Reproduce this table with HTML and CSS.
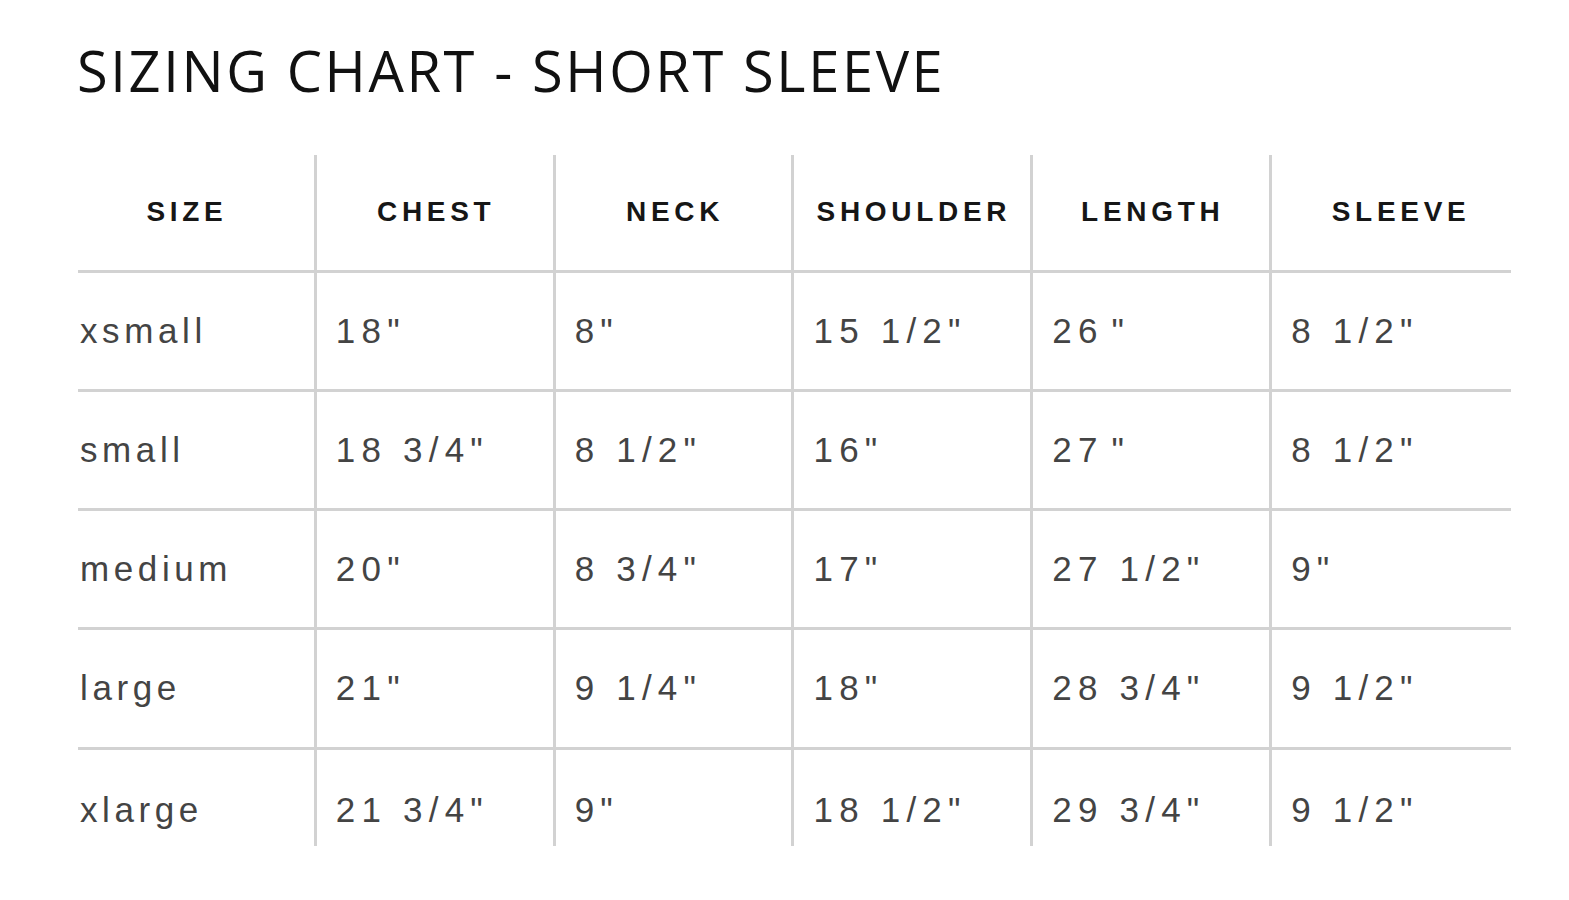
FILE: index.html
```html
<!DOCTYPE html>
<html lang="en">
<head>
<meta charset="utf-8">
<title>Sizing Chart - Short Sleeve</title>
<link rel="stylesheet" href="styles.css">
</head>
<body>
<main class="page">
  <h1 class="title">SIZING CHART - SHORT SLEEVE</h1>
  <div class="chart" role="table">
    <div class="cell head head-size" role="columnheader">SIZE</div>
    <div class="cell head" role="columnheader">CHEST</div>
    <div class="cell head" role="columnheader">NECK</div>
    <div class="cell head" role="columnheader">SHOULDER</div>
    <div class="cell head" role="columnheader">LENGTH</div>
    <div class="cell head head-sleeve last-col" role="columnheader">SLEEVE</div>

    <div class="cell body name" role="cell">xsmall</div>
    <div class="cell body val" role="cell">18"</div>
    <div class="cell body val" role="cell">8"</div>
    <div class="cell body val" role="cell">15 1/2"</div>
    <div class="cell body val" role="cell">26<span class="gap"> </span>"</div>
    <div class="cell body val last-col" role="cell">8 1/2"</div>

    <div class="cell body name" role="cell">small</div>
    <div class="cell body val" role="cell">18 3/4"</div>
    <div class="cell body val" role="cell">8 1/2"</div>
    <div class="cell body val" role="cell">16"</div>
    <div class="cell body val" role="cell">27<span class="gap"> </span>"</div>
    <div class="cell body val last-col" role="cell">8 1/2"</div>

    <div class="cell body name" role="cell">medium</div>
    <div class="cell body val" role="cell">20"</div>
    <div class="cell body val" role="cell">8 3/4"</div>
    <div class="cell body val" role="cell">17"</div>
    <div class="cell body val" role="cell">27 1/2"</div>
    <div class="cell body val last-col" role="cell">9"</div>

    <div class="cell body name" role="cell">large</div>
    <div class="cell body val" role="cell">21"</div>
    <div class="cell body val" role="cell">9 1/4"</div>
    <div class="cell body val" role="cell">18"</div>
    <div class="cell body val" role="cell">28 3/4"</div>
    <div class="cell body val last-col" role="cell">9 1/2"</div>

    <div class="cell body name last-row" role="cell">xlarge</div>
    <div class="cell body val last-row" role="cell">21 3/4"</div>
    <div class="cell body val last-row" role="cell">9"</div>
    <div class="cell body val last-row" role="cell">18 1/2"</div>
    <div class="cell body val last-row" role="cell">29 3/4"</div>
    <div class="cell body val last-row last-col" role="cell">9 1/2"</div>
  </div>
</main>
</body>
</html>
```

FILE: styles.css
```css
html, body {
  margin: 0;
  padding: 0;
  background: #ffffff;
}

.page {
  padding: 38px 0 0 77px;
  width: 1436px;
}

.title {
  margin: 0 0 53px 0;
  font-family: "Open Sans", "DejaVu Sans", sans-serif;
  font-weight: 400;
  font-size: 56px;
  line-height: 64px;
  letter-spacing: 2.6px;
  color: #111111;
  white-space: nowrap;
}

.chart {
  margin-left: 1px;
  width: 1433px;
  display: grid;
  grid-template-columns: repeat(6, 1fr);
  grid-template-rows: 117.5px 119.25px 119.25px 119.25px 119.25px 96.5px;
}

.cell {
  box-sizing: border-box;
  border-right: 3px solid #d2d2d2;
  border-bottom: 3px solid #d2d2d2;
  display: flex;
  font-family: "Liberation Sans", Arial, sans-serif;
}

.cell.last-col {
  border-right: none;
}

.cell.last-row {
  border-bottom: none;
  padding-top: 40px;
}

.head {
  align-items: center;
  justify-content: center;
  font-weight: 700;
  font-size: 28px;
  line-height: 32px;
  letter-spacing: 4.7px;
  color: #161616;
  padding-left: 3px;
}

.head-size {
  padding-left: 0;
  padding-right: 18px;
}

.head-sleeve {
  padding-left: 19px;
}

.body {
  align-items: flex-start;
  padding-top: 38px;
  padding-left: 19px;
  font-size: 35px;
  line-height: 40px;
  color: #444444;
  white-space: pre;
}

.body.name {
  padding-left: 2px;
  letter-spacing: 4.6px;
}

.body.val {
  letter-spacing: 6.2px;
}

.gap {
  letter-spacing: -2px;
}
```
